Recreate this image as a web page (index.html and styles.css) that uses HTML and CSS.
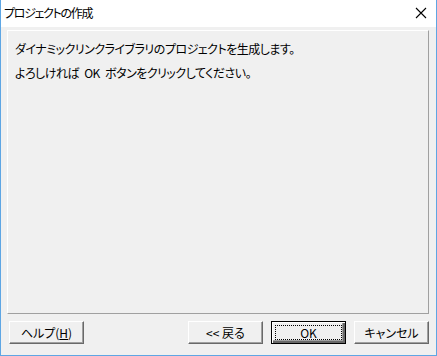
FILE: index.html
```html
<!DOCTYPE html>
<html lang="ja">
<head>
  <meta charset="UTF-8" />
  <title>プロジェクトの作成</title>
  <link rel="stylesheet" href="styles.css">
</head>
<body>
<div class="window">
  <div class="titlebar">
    <span class="title">プロジェクトの作成</span>
    <span class="close">
      <svg width="12" height="12" viewBox="0 0 12 12"><path d="M1 1 L11 11 M11 1 L1 11" stroke="#000" stroke-width="1.1" fill="none"/></svg>
    </span>
  </div>

  <div class="client">
    <div class="panel">
      <p>ダイナミックリンクライブラリのプロジェクトを生成します。</p>
      <p>よろしければ&nbsp;OK&nbsp;ボタンをクリックしてください。</p>
    </div>

    <div class="button-row">
      <button class="btn">ヘルプ(<u>H</u>)</button>
      <div class="spacer"></div>
      <button class="btn">&lt;&lt;&nbsp;戻る</button>
      <button class="btn default"><span class="focus">OK</span></button>
      <button class="btn">キャンセル</button>
    </div>
  </div>
</div>
</body>
</html>
```

FILE: styles.css
```css
* { box-sizing: border-box; margin: 0; padding: 0; }

body {
  font-family: "Noto Sans CJK JP", "Noto Sans", sans-serif;
  font-size: 12px;
  font-feature-settings: "palt";
  color: #000;
  background: #fff;
}

.window {
  width: 437px;
  height: 356px;
  border: 1px solid #5ea6e4;
  border-top: none;
  display: flex;
  flex-direction: column;
  background: #f0f0f0;
}

.titlebar {
  height: 27px;
  background: #fff;
  display: flex;
  align-items: center;
  justify-content: space-between;
  padding: 0 8px 2px 3px;
}
.title {
  font-size: 12px;
  line-height: 1;
  letter-spacing: -1.3px;
}
.close {
  display: flex;
  align-items: center;
  padding-right: 1px;
}

.client {
  flex: 1;
  display: flex;
  flex-direction: column;
  padding: 3px 7px 10px 6px;
}

.panel {
  height: 284px;
  border-top: 1px solid #fff;
  border-left: 1px solid #fff;
  border-right: 1px solid #a0a0a0;
  border-bottom: 1px solid #a0a0a0;
  padding: 6px 7px;
}
.panel p {
  line-height: 24px;
  height: 24px;
  letter-spacing: -0.5px;
  word-spacing: 3px;
}

.button-row {
  display: flex;
  gap: 8px;
  margin-top: 7px;
  padding-left: 2px;
}
.spacer { flex: 1; }

.btn {
  width: 75px;
  height: 23px;
  font-family: inherit;
  font-size: 12px;
  font-feature-settings: "palt";
  background: #f0f0f0;
  border-top: 1px solid #fff;
  border-left: 1px solid #fff;
  border-right: 1px solid #696969;
  border-bottom: 1px solid #696969;
  box-shadow: inset -1px -1px 0 #a0a0a0;
  color: #000;
  display: flex;
  align-items: center;
  justify-content: center;
  padding-bottom: 1px;
}
.btn u { text-underline-offset: 1px; }

.btn.default {
  border: 1px solid #000;
  box-shadow: inset 1px 1px 0 #fff, inset -2px -2px 0 #696969, inset -3px -3px 0 #a0a0a0;
  padding: 3px;
}
.focus {
  width: 100%;
  height: 100%;
  border: 1px dotted #000;
  display: flex;
  align-items: center;
  justify-content: center;
}
```
